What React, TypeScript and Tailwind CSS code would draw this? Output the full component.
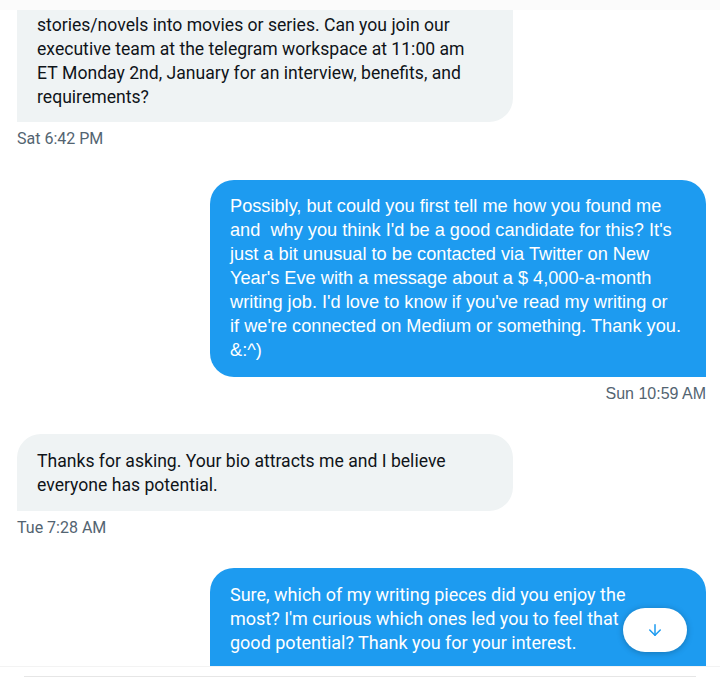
import React from "react";
import { ArrowDown } from "lucide-react";

const roboto = { fontFamily: '"Roboto", "Liberation Sans", sans-serif' };
const arial = { fontFamily: '"Liberation Sans", "Noto Sans", sans-serif' };

export default function App() {
  return (
    <div className="relative w-[720px] h-[678px] overflow-hidden bg-white" style={roboto}>
      <div className="flex flex-col pl-[17px] pr-[14px]">
        <div className="mt-[10px] flex flex-col items-start">
          <div className="w-[496px] bg-[#eff3f4] text-[#0f1419] rounded-br-[24px] px-5 pt-[3px] pb-[13px] text-[17.6px] leading-[24px]">
            stories/novels into movies or series. Can you join our executive team at the telegram workspace at 11:00 am ET&nbsp;Monday 2nd, January for an interview, benefits, and requirements?
          </div>
          <div className="mt-[7px] h-5 text-[16px] leading-5 text-[#536471]">Sat 6:42 PM</div>
        </div>

        <div className="mt-[31px] flex flex-col items-end">
          <div
            className="w-[496px] bg-[#1d9bf0] text-white rounded-[24px] rounded-br-none px-5 pt-[14px] pb-[15px] text-[18.2px] leading-[24px]"
            style={arial}
          >
            Possibly, but could you first tell me how you found me and&nbsp; why you think I'd be a good candidate for this? It's just a bit unusual to be contacted via Twitter on New Year's Eve with a message about a $ 4,000-a-month writing job. I'd love to know if you've read my writing or if&nbsp;we're connected on Medium or something. Thank you. &amp;:^)
          </div>
          <div className="mt-[7px] h-5 text-[16px] leading-5 text-[#536471]" style={arial}>
            Sun 10:59 AM
          </div>
        </div>

        <div className="mt-[30px] flex flex-col items-start">
          <div className="w-[496px] bg-[#eff3f4] text-[#0f1419] rounded-[24px] rounded-bl-none px-5 pt-[15px] pb-[14px] text-[17.6px] leading-[24px]">
            Thanks for asking. Your bio attracts me and I believe everyone has potential.
          </div>
          <div className="mt-[7px] h-5 text-[16px] leading-5 text-[#536471]">Tue 7:28 AM</div>
        </div>

        <div className="mt-[30px] flex flex-col items-end">
          <div className="w-[496px] bg-[#1d9bf0] text-white rounded-t-[24px] rounded-bl-[24px] pl-5 pr-[44px] pt-[15px] pb-[40px] text-[18px] leading-[24px]">
            Sure, which of my writing pieces did you enjoy the most? I'm curious which ones led you to feel that good potential? Thank you for your interest.
          </div>
        </div>
      </div>

      <div className="absolute top-0 left-0 right-0 h-[10px] bg-[#fbfbfb]/90" />

      <div className="absolute left-0 right-0 top-[666px] bottom-0 bg-white border-t border-[#f3f3f3]">
        <div className="mt-[9px] mx-[24px] border-t border-[#e6e6e6]" />
      </div>

      <button className="absolute left-[623px] top-[608px] w-[64px] h-[44px] rounded-full bg-white shadow-[0_1px_6px_rgba(0,0,0,0.25)] flex items-center justify-center">
        <ArrowDown size={18} strokeWidth={2} color="#1d9bf0" />
      </button>
    </div>
  );
}
